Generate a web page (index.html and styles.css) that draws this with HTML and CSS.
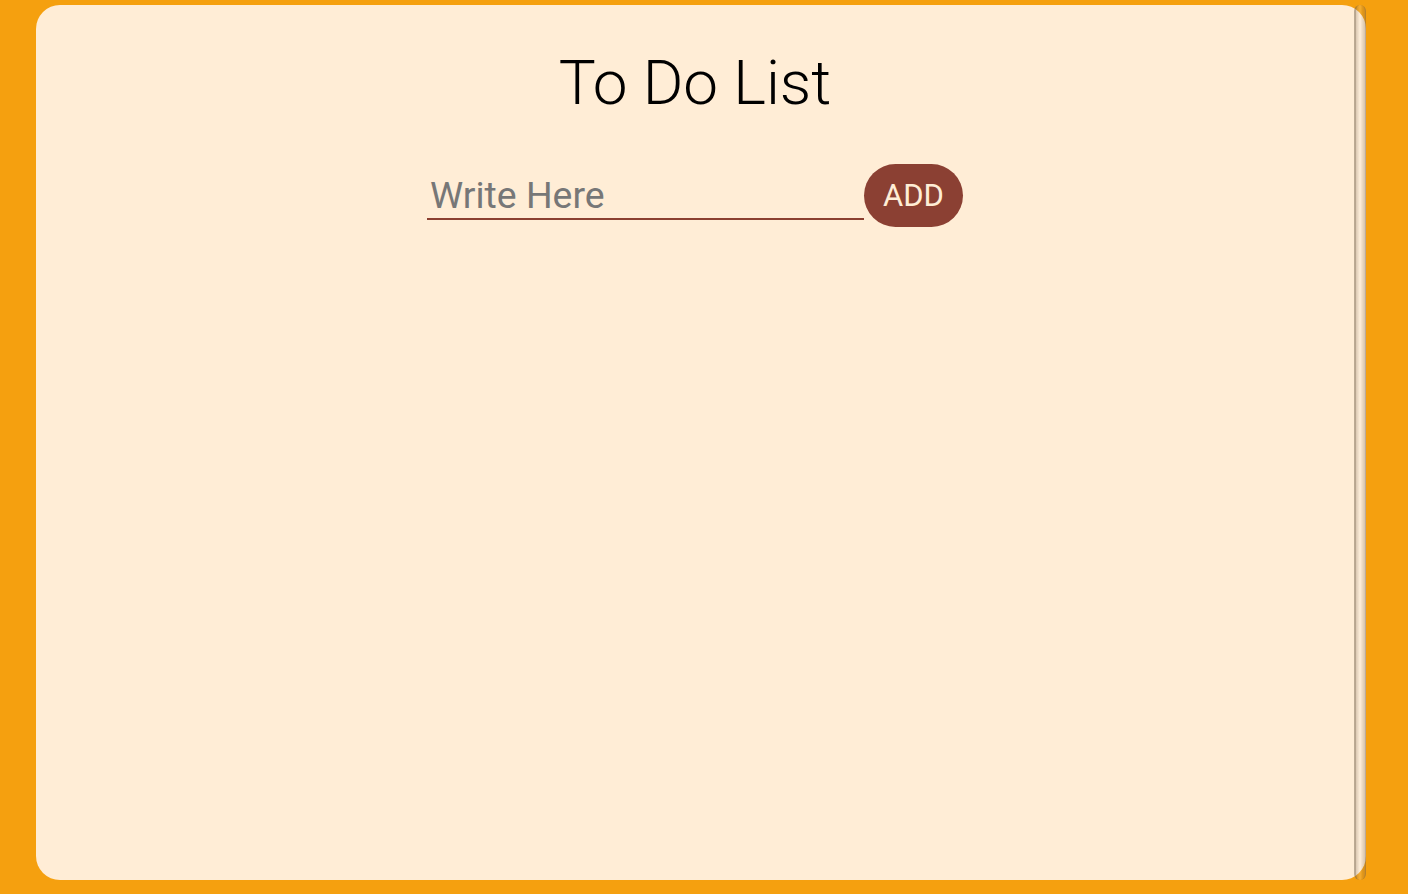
FILE: index.html
```html
<!DOCTYPE html>
<html>
<head>
<meta charset="utf-8">
<link rel="stylesheet" href="styles.css">
</head>
<body>
<div class="frame">
  <div class="card">
    <main class="content">
      <h1 class="title">To Do List</h1>
      <div class="entry">
        <input class="field" type="text" placeholder="Write Here">
        <button class="add">ADD</button>
      </div>
    </main>
    <div class="scrollbar"></div>
  </div>
</div>
</body>
</html>
```

FILE: styles.css
```css
html, body {
  margin: 0;
  height: 100%;
}
body {
  background: #f5a00f;
  font-family: Roboto, "Liberation Sans", sans-serif;
  overflow: hidden;
}
.frame {
  box-sizing: border-box;
  height: 100%;
  padding: 5px 42px 14px 36px;
  display: flex;
}
.card {
  flex: 1;
  background: #ffedd6;
  border-radius: 24px;
  display: flex;
}
.content {
  flex: 1;
  display: flex;
  flex-direction: column;
  align-items: center;
}
.title {
  margin: 40px 0 0;
  font-weight: 300;
  font-size: 62px;
  line-height: 76px;
  color: #000;
}
.entry {
  margin-top: 43px;
  display: flex;
  align-items: flex-start;
}
.field {
  box-sizing: border-box;
  width: 437px;
  height: 56px;
  padding: 8px 3px 0;
  border: none;
  border-bottom: 2px solid #8b3f30;
  background: transparent;
  font-family: Roboto, "Liberation Sans", sans-serif;
  font-size: 37.4px;
  color: #333;
  outline: none;
}
.field::placeholder {
  color: #777;
}
.add {
  box-sizing: border-box;
  width: 99px;
  height: 63px;
  border: none;
  border-radius: 32px;
  background: #8b4033;
  color: #ffedd6;
  font-family: Roboto, "Liberation Sans", sans-serif;
  font-size: 31px;
  padding: 0;
}
.scrollbar {
  box-sizing: border-box;
  width: 12px;
  border-radius: 6px;
  border-left: 2px solid rgba(110, 90, 70, 0.32);
  border-right: 1px solid rgba(110, 90, 70, 0.3);
  background: linear-gradient(to right, rgba(120, 100, 80, 0.26), rgba(255, 255, 255, 0.15) 45%, rgba(120, 100, 80, 0.16) 75%, rgba(120, 100, 80, 0.3));
}
```
